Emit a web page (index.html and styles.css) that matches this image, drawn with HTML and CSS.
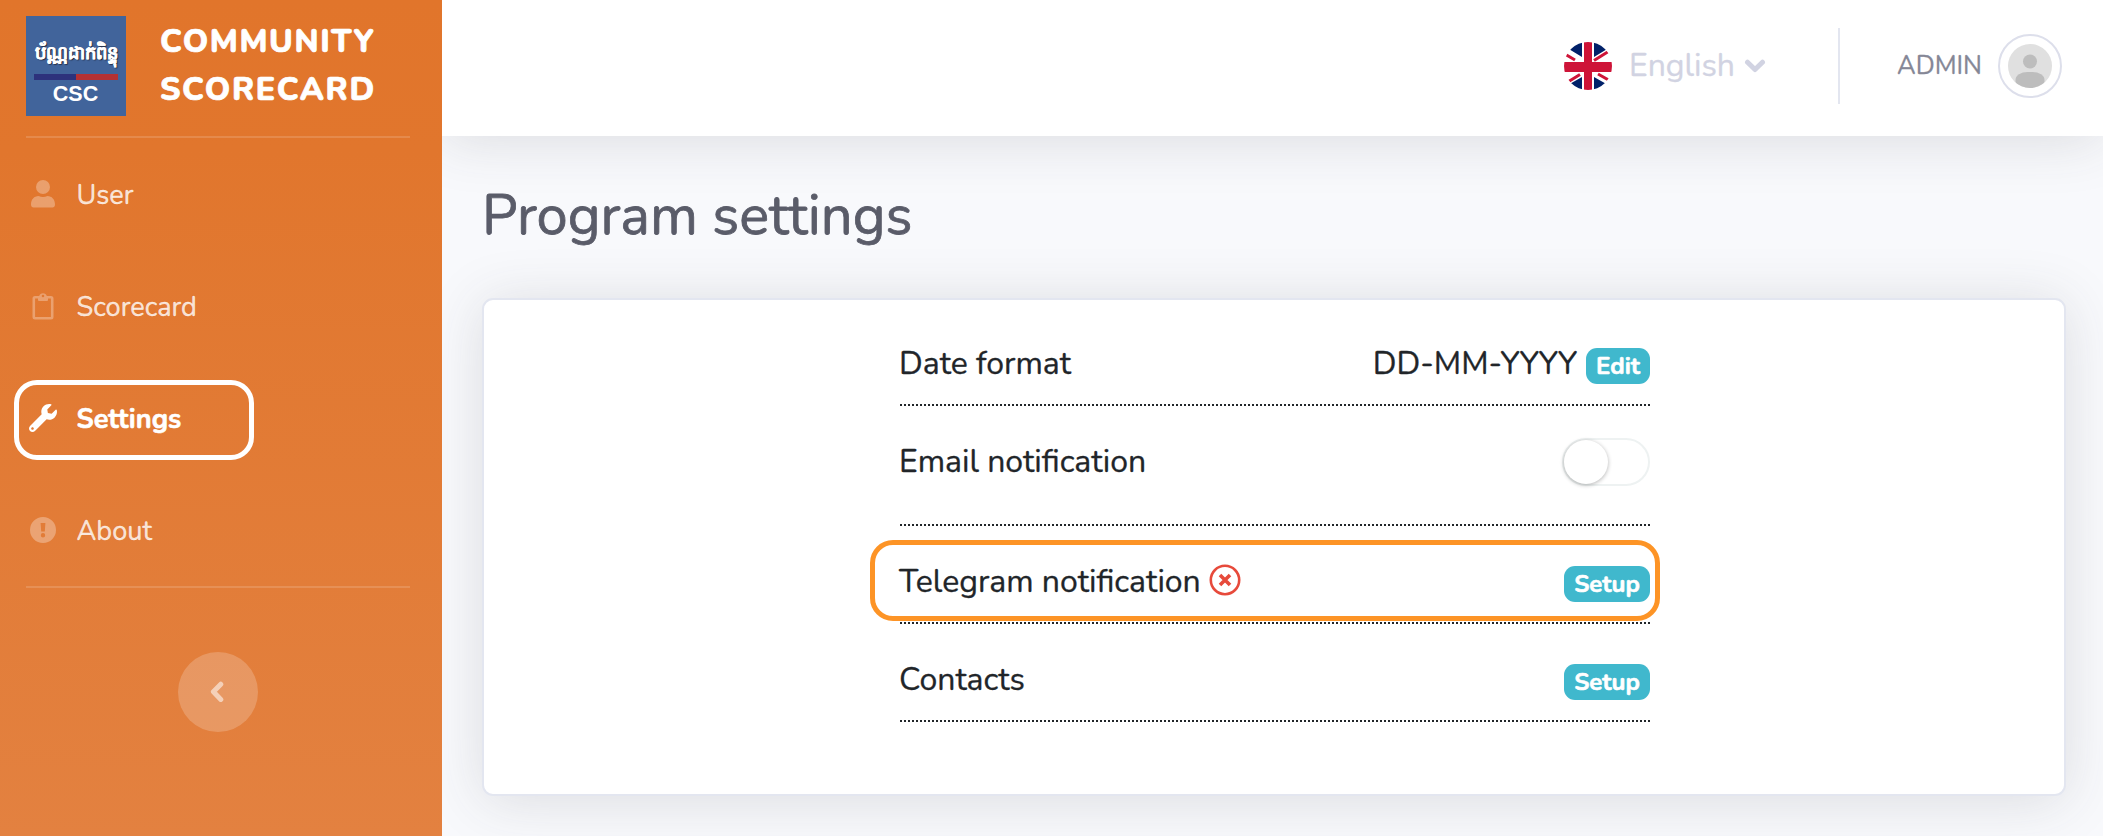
FILE: index.html
```html
<!DOCTYPE html>
<html lang="en">
<head>
<meta charset="utf-8">
<title>Program settings</title>
<link rel="stylesheet" href="styles.css">
</head>
<body>
<div class="app">
  <aside class="sidebar">
    <div class="brand">
      <div class="logo">
        <span class="logo-khmer" lang="km">ប័ណ្ណដាក់ពិន្ទុ</span>
        <span class="logo-bar"></span>
        <span class="logo-csc">CSC</span>
      </div>
      <div class="brand-name">COMMUNITY<br>SCORECARD</div>
    </div>
    <hr class="divider">
    <nav class="nav">
      <a class="nav-item"><svg class="nav-icon" viewBox="0 0 28 28"><circle cx="14" cy="7" r="7"/><path d="M2 24.500c0-5 3.200-8.500 7.500-8.500 1.600.7 3 .9 4.500.9s2.900-.2 4.500-.9c4.300 0 7.500 3.500 7.500 8.500 0 1.800-1 3-2.600 3H4.600C3 27.500 2 26.300 2 24.500z"/></svg><span>User</span></a>
      <a class="nav-item"><svg class="nav-icon" viewBox="0 0 28 28"><path fill-rule="evenodd" d="M6 4h4.200a4 4 0 0 1 7.600 0H22a2.500 2.500 0 0 1 2.500 2.500v18.500a2.500 2.500 0 0 1-2.500 2.500H6a2.500 2.500 0 0 1-2.500-2.500V6.500A2.500 2.500 0 0 1 6 4zM6.100 6.600v18.300h15.800V6.600H19v1.400a1 1 0 0 1-1 1h-8a1 1 0 0 1-1-1V6.600zM14 2.700a1.300 1.300 0 1 0 0 2.600 1.300 1.300 0 0 0 0-2.600z"/></svg><span>Scorecard</span></a>
      <a class="nav-item active"><svg class="nav-icon" viewBox="0 0 512 512"><path d="M507.730 109.100c-2.240-9.030-13.540-12.090-20.120-5.510l-74.360 74.360-67.880-11.310-11.310-67.880 74.360-74.360c6.620-6.620 3.430-17.900-5.660-20.160-47.380-11.740-99.550.91-136.580 37.930-39.640 39.640-50.550 97.100-34.050 147.200L18.740 402.760c-24.990 24.990-24.990 65.510 0 90.500 24.990 24.990 65.510 24.990 90.500 0l213.210-213.210c50.120 16.710 107.470 5.680 147.370-34.220 37.070-37.070 49.700-89.320 37.910-136.730zM64 472c-13.250 0-24-10.750-24-24 0-13.260 10.750-24 24-24s24 10.740 24 24c0 13.250-10.750 24-24 24z"/></svg><span>Settings</span></a>
      <a class="nav-item"><svg class="nav-icon" viewBox="0 0 28 28"><path fill-rule="evenodd" d="M14 1a13 13 0 1 0 0 26 13 13 0 0 0 0-26zM11.600 7h4.800l-.6 8.500h-3.600zM14 17a2.200 2.200 0 1 1 0 4.400 2.200 2.200 0 0 1 0-4.400z"/></svg><span>About</span></a>
    </nav>
    <hr class="divider">
    <div class="collapse"><svg viewBox="0 0 14 22"><path d="M10.800 3.200 3.400 10.800l7.400 7.600" fill="none" stroke="currentColor" stroke-width="5" stroke-linecap="round" stroke-linejoin="round"/></svg></div>
  </aside>
  <main class="content">
    <header class="topbar">
      <svg class="flag" viewBox="0 0 48 48">
        <defs><clipPath id="round"><circle cx="24" cy="24" r="24"/></clipPath></defs>
        <g clip-path="url(#round)">
          <path fill="#fff" d="M0 0h48v48H0z"/>
          <path fill="#012169" d="M4 6.500 10 0h8v15zM44 6.500 38 0h-8v15zM3 43.500 10 48h8V35zM45 43.500 38 48h-8V35z"/>
          <path stroke="#ce1438" stroke-width="3" d="M0 11.500 11 18M46 8.500 30 18.500M3 40.500 16 32.500M34 32l14 8"/>
          <path stroke="#ce1438" stroke-width="8" d="M24 0v48"/>
          <path stroke="#ce1438" stroke-width="10" d="M0 25h48"/>
        </g>
      </svg>
      <span class="lang">English</span>
      <svg class="caret" viewBox="0 0 22 16"><path d="M3.500 4.200 11 11.500l7.500-7.300" fill="none" stroke="currentColor" stroke-width="5" stroke-linecap="round" stroke-linejoin="round"/></svg>
      <span class="bar"></span>
      <span class="admin">ADMIN</span>
      <svg class="avatar" viewBox="0 0 64 64"><defs><clipPath id="face"><circle cx="32" cy="32" r="22"/></clipPath></defs><circle cx="32" cy="32" r="31" fill="#fff" stroke="#dddfeb" stroke-width="2"/><circle cx="32" cy="32" r="22" fill="#e0e0e0"/><g clip-path="url(#face)" fill="#bdbdbd"><circle cx="32" cy="27.500" r="7"/><rect x="17.500" y="38" width="29" height="22" rx="12" ry="8"/></g></svg>
    </header>
    <h1 class="title">Program settings</h1>
    <section class="card">
      <div class="list">
        <div class="row"><span class="label">Date format</span><span class="value">DD-MM-YYYY<span class="badge edit">Edit</span></span></div>
        <div class="row tall"><span class="label">Email notification</span><span class="toggle"><span class="knob"></span></span></div>
        <div class="row"><span class="label">Telegram notification<svg class="cross" viewBox="0 0 32 32"><circle cx="16" cy="16" r="14.200" fill="none" stroke="#e74a3b" stroke-width="2.600"/><path d="M11 11l10 10M21 11L11 21" stroke="#e74a3b" stroke-width="3.600"/></svg></span><span class="badge">Setup</span><span class="highlight"></span></div>
        <div class="row"><span class="label">Contacts</span><span class="badge">Setup</span></div>
      </div>
    </section>
  </main>
</div>
</body>
</html>
```
FILE: styles.css
```css
*, *::after { box-sizing: border-box; }
body { margin: 0; font-family: Nunito, Lato, sans-serif; font-size: 32px; line-height: 48px; color: #212529; background: #f8f9fc; overflow: hidden; -webkit-text-stroke: .3px currentColor; }
svg { display: block; flex: none; }
span { white-space: nowrap; }
.app { display: flex; height: 836px; }
.sidebar { width: 442px; flex: none; background: linear-gradient(180deg, #e1752b 0%, #e1762d 18%, #e38140 100%); position: relative; z-index: 2; color: #fff; }
.brand { display: flex; padding: 16px 0 0 26px; height: 136px; }
.logo { width: 100px; height: 100px; background: #41649b; display: flex; flex-direction: column; align-items: center; }
.logo-khmer { font-size: 18px; line-height: 28px; height: 28px; margin-top: 23px; font-weight: 700; text-shadow: 1px 1px 1px #223; }
.logo-bar { width: 84px; height: 6px; margin-top: 7px; background: linear-gradient(90deg, #2d327c 50%, #b53133 50%); }
.logo-csc { font: 700 21.500px/24px "Liberation Sans", sans-serif; margin: 2px 1px 0 0; -webkit-text-stroke: 0; }
.brand-name { margin: 2px 0 0 34px; font-weight: 800; line-height: 48px; letter-spacing: 1.600px; -webkit-text-stroke-width: .7px; }
.divider { height: 2px; border: 0; margin: 0 32px 0 26px; background: rgba(255,255,255,.15); }
.nav-item { display: flex; align-items: center; height: 112px; padding: 0 0 0 29px; font-size: 27.200px; color: rgba(255,255,255,.8); }
.nav-item span { padding-top: 3px; }
.nav { height: 448px; }
.nav-icon { width: 28px; height: 28px; margin-right: 19.500px; fill: rgba(255,255,255,.3); }
.nav-item.active { position: relative; font-weight: 700; color: #fff; -webkit-text-stroke-width: .6px; }
.nav-item.active .nav-icon { fill: #fff; }
.nav-item.active svg { -webkit-text-stroke: 0; }
.nav-item.active::after { content: ""; position: absolute; left: 14px; top: 18px; width: 240px; height: 80px; border: 5px solid #fff; border-radius: 23px; }
.collapse { width: 80px; height: 80px; border-radius: 50%; background: rgba(255,255,255,.2); margin: 64px 0 0 178px; display: flex; align-items: center; padding-left: 31.500px; color: rgba(255,255,255,.55); }
.collapse svg { width: 14px; height: 22px; }
.content { flex: 1; min-width: 0; }
.topbar { height: 136px; background: #fff; box-shadow: 0 4.800px 56px rgba(58,59,69,.15); display: flex; align-items: center; justify-content: flex-end; padding: 0 41px 4px 0; }
.flag { width: 48px; height: 48px; margin-right: 17px; }
.lang { color: #d1d3e2; width: 105px; }
.caret { width: 22px; height: 16px; margin: 0 72px 0 10px; color: #d1d3e2; }
.bar { width: 2px; height: 76px; background: #e3e6f0; margin-right: 57px; }
.admin { color: #858796; font-size: 25.600px; width: 84px; }
.avatar { width: 64px; height: 64px; margin-left: 17px; }
.title { margin: 46px 0 0 40px; font-size: 56px; font-weight: 400; line-height: 68px; color: #5a5c69; -webkit-text-stroke-width: .8px; }
.card { margin: 48px 37px 0 40px; height: 498px; background: #fff; border: 2px solid #e3e6f0; border-radius: 11px; box-shadow: 0 4.800px 56px rgba(58,59,69,.15); padding-top: 8px; }
.list { width: 750px; margin: 0 0 0 416px; }
.row { position: relative; height: 98px; padding: 32px 0 16px; display: flex; justify-content: space-between; align-items: flex-start; border-bottom: 2px dotted #212529; }
.row.tall { height: 120px; }
.value, .label { display: flex; }
.label { margin-left: -1px; }
.badge { font-size: 24px; font-weight: 700; line-height: 36px; height: 36px; width: 86px; text-align: center; color: #fff; background: #40b8cd; border-radius: 11px; margin-top: 8px; -webkit-text-stroke-width: .6px; }
.badge.edit { width: 64px; margin-left: 9px; }
.toggle { width: 88px; height: 48px; border: 2px solid #eef2f2; border-radius: 24px; }
.knob { display: block; width: 44px; height: 44px; border-radius: 50%; background: #fff; box-shadow: 0 1px 4px rgba(0,0,0,.3); }
.cross { width: 32px; height: 32px; margin: 6px 0 0 8px; }
.highlight { position: absolute; left: -30px; top: 14px; width: 790px; height: 81px; border: 5px solid #fd9426; border-radius: 23px; }
```
